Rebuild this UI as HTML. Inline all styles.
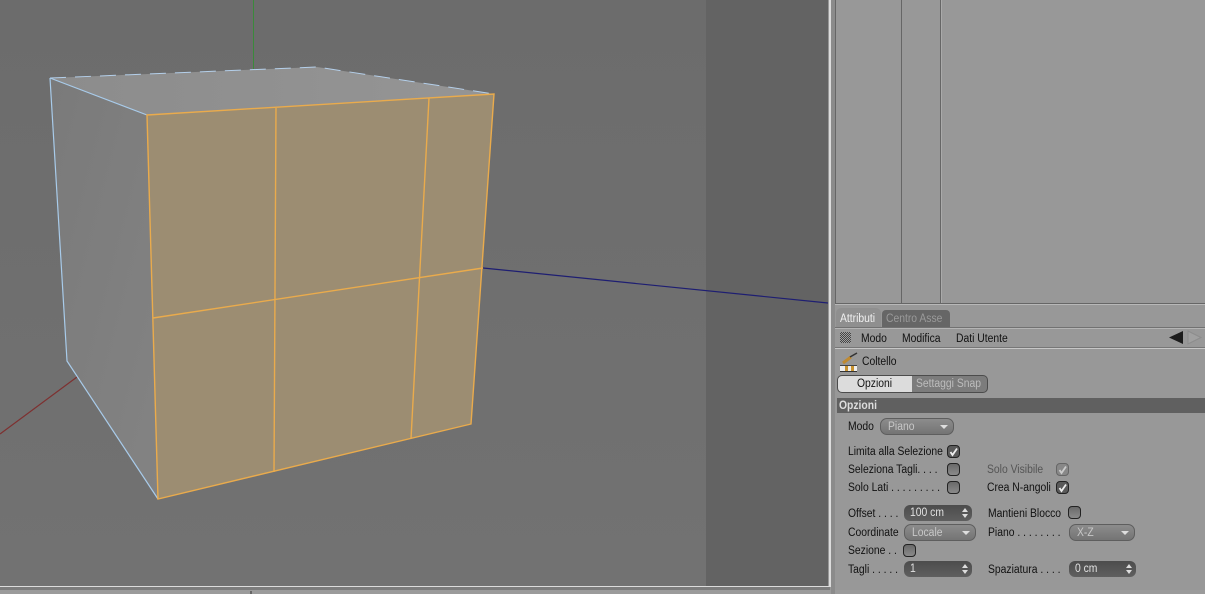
<!DOCTYPE html>
<html><head><meta charset="utf-8"><style>
html,body{margin:0;padding:0;background:#989898}
#r{position:relative;width:1205px;height:594px;overflow:hidden;background:#989898;font-family:"Liberation Sans",sans-serif;font-size:11.5px;color:#111}
#r div{position:absolute;box-sizing:border-box}
.t{white-space:nowrap;line-height:14px;transform-origin:0 50%;transform:scaleX(.9);filter:blur(.25px)}
.g{color:#555}
.cb{width:13px;height:13px;border:1px solid #222;border-radius:4px;background:linear-gradient(#6a6a6a,#8a8a8a)}
.cb.c{background:#5a5a5a}
.cb svg{position:absolute;left:0;top:0}
.dd{height:17px;border:1px solid #5e5e5e;border-radius:7px;background:linear-gradient(#8c8c8c,#747474);color:#c8c8c8;line-height:16px;padding-left:7px}
.dd::after{content:"";position:absolute;right:5px;top:6px;border:4px solid transparent;border-top:4px solid #ddd;border-bottom:0}
.sp{height:16px;border-radius:6px;background:linear-gradient(#4c4c4c,#5f5f5f);color:#e2e2e2;line-height:17px;padding-left:6px}
.sp::after{content:"";position:absolute;right:4px;top:3px;border:3px solid transparent;border-bottom:4px solid #ddd;border-top:0}
.sp::before{content:"";position:absolute;right:4px;top:9px;border:3px solid transparent;border-top:4px solid #ddd;border-bottom:0}
.s{display:inline-block;transform:scaleX(.9);transform-origin:0 50%;filter:blur(.25px)}
</style></head><body><div id="r">
<svg style="position:absolute;left:0;top:0" width="828" height="586" viewBox="0 0 828 586">
<defs>
<linearGradient id="bg" x1="0" y1="0" x2="0" y2="1"><stop offset="0" stop-color="#6c6c6c"/><stop offset="1" stop-color="#727272"/></linearGradient>
<linearGradient id="top" x1="0" y1="0" x2="1" y2="0"><stop offset="0" stop-color="#8c8c8c"/><stop offset="1" stop-color="#959595"/></linearGradient>
<linearGradient id="side" x1="0" y1="0" x2="1" y2="1"><stop offset="0" stop-color="#7a7a7a"/><stop offset="1" stop-color="#838383"/></linearGradient>
</defs>
<rect width="828" height="586" fill="url(#bg)"/>
<rect x="706" width="122" height="586" fill="#636363"/>
<path d="M253.500 0V69" stroke="#3a8a3a" fill="none"/>
<path d="M0 434L77 377" stroke="#7e3030" fill="none" stroke-width="1.200"/>
<path d="M483 268L828 303" stroke="#1e1e72" fill="none" stroke-width="1.200"/>
<polygon points="50,78 317,67 494,94 147,115" fill="url(#top)"/>
<polygon points="50,78 147,115 158,499 67,361" fill="url(#side)"/>
<polygon points="147,115 494,94 471,424 158,499" fill="#9c8d72"/>
<path d="M50 78L317 67L494 94" stroke="#b4cfea" fill="none" stroke-dasharray="16 9"/>
<path d="M50 78L147 115M50 78L67 361L158 499" stroke="#a8cbea" fill="none" stroke-width="1.200"/>
<path d="M147 115L494 94L471 424L158 499Z M276 107L274 472 M429 98L411 439 M153 318L483 268" stroke="#eaab4c" fill="none" stroke-width="1.400"/>
</svg>
<div style="left:0;top:586px;width:830px;height:1px;background:#dcdcdc"></div>
<div style="left:0;top:587px;width:830px;height:3px;background:#7c7c7c"></div>
<div style="left:0;top:590px;width:1205px;height:4px;background:#9b9b9b"></div>
<div style="left:250px;top:591px;width:2px;height:3px;background:#666"></div>
<div style="left:829px;top:0;width:2px;height:587px;background:#dcdcdc"></div>
<div style="left:831px;top:0;width:4px;height:594px;background:#8b8b8b"></div>
<div style="left:835px;top:0;width:1px;height:303px;background:#666"></div>
<div style="left:901px;top:0;width:1px;height:303px;background:#666"></div>
<div style="left:940px;top:0;width:1px;height:303px;background:#666"></div>
<div style="left:941px;top:0;width:1px;height:303px;background:#aaa"></div>
<div style="left:835px;top:303px;width:370px;height:1px;background:#666"></div>
<div style="left:835px;top:304px;width:370px;height:1px;background:#b8b8b8"></div>
<div style="left:836px;top:308px;width:45px;height:19px;background:#8f8f8f;border-radius:5px 5px 0 0"></div>
<div class="t" style="left:840px;top:312px;color:#f0f0f0">Attributi</div>
<div style="left:882px;top:310px;width:68px;height:17px;background:#666;border-radius:4px 4px 0 0"></div>
<div class="t" style="left:886px;top:312px;color:#9a9a9a">Centro Asse</div>
<div style="left:835px;top:327px;width:370px;height:1px;background:#727272"></div>
<div style="left:835px;top:328px;width:370px;height:1px;background:#b4b4b4"></div>
<div style="left:840px;top:332px;width:11px;height:11px;background:repeating-conic-gradient(#444 0 25%,#a0a0a0 0 50%) 0 0/2px 2px"></div>
<div class="t" style="left:861px;top:332px">Modo</div>
<div class="t" style="left:902px;top:332px">Modifica</div>
<div class="t" style="left:956px;top:332px">Dati Utente</div>
<svg style="position:absolute;left:1165px;top:328px" width="40" height="20"><path d="M4 9.500L18 3V16Z" fill="#1c1c1c"/><path d="M23 3L36 9.500L23 16Z" fill="#a0a0a0" stroke="#8c8c8c"/></svg>
<div style="left:835px;top:347px;width:370px;height:1px;background:#777"></div>
<div style="left:835px;top:348px;width:370px;height:1px;background:#c6c6c6"></div>
<svg style="position:absolute;left:838px;top:352px" width="20" height="20"><path d="M5 11L13 5" stroke="#c08a30" stroke-width="3"/><path d="M12 5L19 1" stroke="#333" stroke-width="1.500"/><path d="M2 13.500H19" stroke="#444"/><rect x="2" y="14" width="17" height="6" fill="#eee"/><rect x="7" y="14" width="3" height="6" fill="#c8922f"/><rect x="13" y="14" width="3" height="6" fill="#c8922f"/><path d="M2 19.500H19" stroke="#333"/></svg>
<div class="t" style="left:862px;top:355px">Coltello</div>
<div style="left:837px;top:375px;width:76px;height:18px;background:#dcdcdc;border:1px solid #4c4c4c;border-radius:5px 0 0 5px"></div>
<div class="t" style="left:857px;top:377px">Opzioni</div>
<div style="left:912px;top:375px;width:76px;height:18px;background:#7c7c7c;border:1px solid #4c4c4c;border-left:0;border-radius:0 5px 5px 0"></div>
<div class="t" style="left:916px;top:377px;color:#bdbdbd">Settaggi Snap</div>
<div style="left:837px;top:398px;width:368px;height:15px;background:#606060"></div>
<div class="t" style="left:839px;top:399px;color:#ddd;font-weight:bold">Opzioni</div>

<div class="t" style="left:848px;top:420px">Modo</div>
<div class="dd" style="left:880px;top:418px;width:74px"><span class="s">Piano</span></div>

<div class="t" style="left:848px;top:445px">Limita alla Selezione</div>
<div class="cb c" style="left:947px;top:445px"><svg width="11" height="11"><path d="M2.500 6L4.500 9L9 2.500" stroke="#eee" stroke-width="1.800" fill="none"/></svg></div>
<div class="t" style="left:848px;top:463px">Seleziona Tagli. . . .</div>
<div class="cb" style="left:947px;top:463px"></div>
<div class="t g" style="left:987px;top:463px">Solo Visibile</div>
<div class="cb" style="left:1056px;top:463px;background:#888;border-color:#666"><svg width="11" height="11"><path d="M2.500 6L4.500 9L9 2.500" stroke="#ccc" stroke-width="1.800" fill="none"/></svg></div>
<div class="t" style="left:848px;top:481px">Solo Lati . . . . . . . . .</div>
<div class="cb" style="left:947px;top:481px"></div>
<div class="t" style="left:987px;top:481px">Crea N-angoli</div>
<div class="cb c" style="left:1056px;top:481px"><svg width="11" height="11"><path d="M2.500 6L4.500 9L9 2.500" stroke="#eee" stroke-width="1.800" fill="none"/></svg></div>

<div class="t" style="left:848px;top:507px">Offset . . . .</div>
<div class="sp" style="left:904px;top:505px;width:68px"><span class="s">100 cm</span></div>
<div class="t" style="left:988px;top:507px">Mantieni Blocco</div>
<div class="cb" style="left:1068px;top:506px"></div>

<div class="t" style="left:848px;top:526px">Coordinate</div>
<div class="dd" style="left:904px;top:524px;width:72px"><span class="s">Locale</span></div>
<div class="t" style="left:988px;top:526px">Piano . . . . . . . .</div>
<div class="dd" style="left:1069px;top:524px;width:66px"><span class="s">X-Z</span></div>

<div class="t" style="left:848px;top:544px">Sezione . .</div>
<div class="cb" style="left:903px;top:544px"></div>

<div class="t" style="left:848px;top:563px">Tagli . . . . .</div>
<div class="sp" style="left:904px;top:561px;width:68px"><span class="s">1</span></div>
<div class="t" style="left:988px;top:563px">Spaziatura . . . .</div>
<div class="sp" style="left:1069px;top:561px;width:67px"><span class="s">0 cm</span></div>
</div></body></html>
